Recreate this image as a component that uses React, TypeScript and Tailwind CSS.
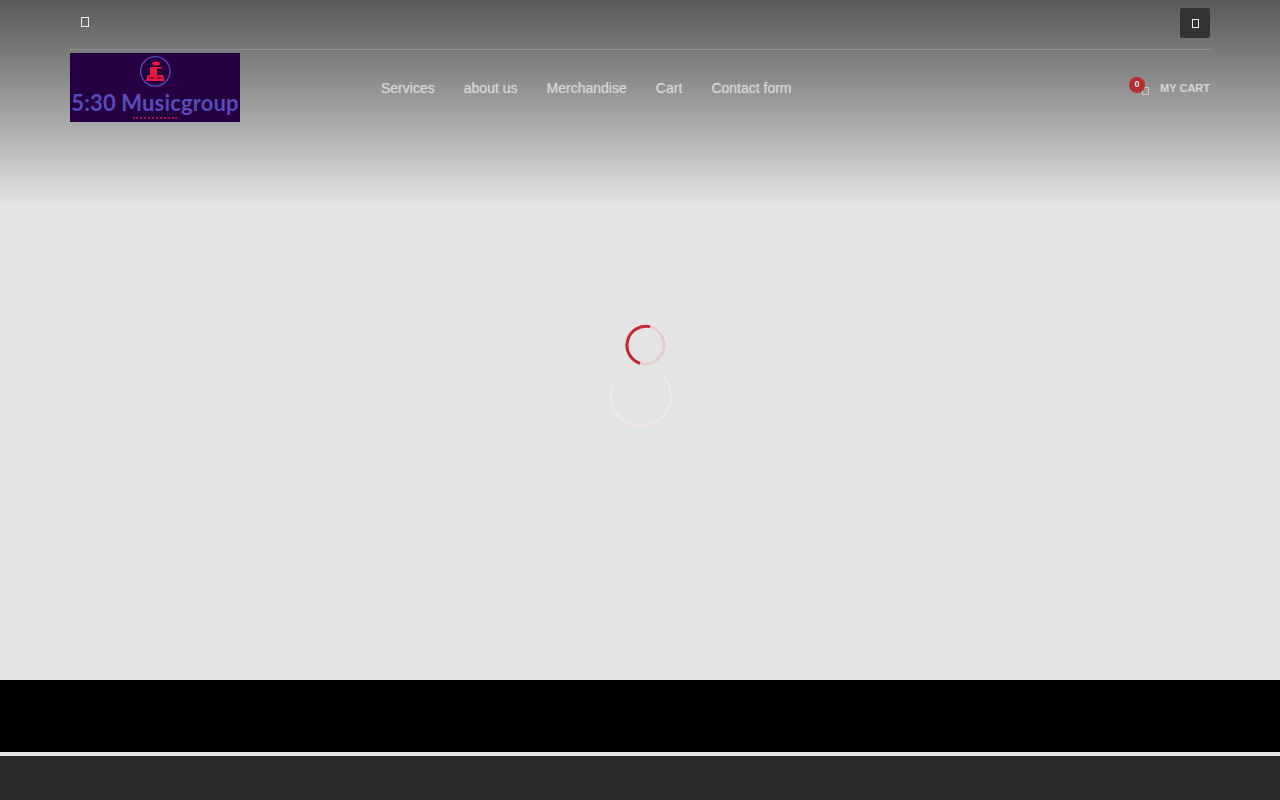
const navLinks = ['Services', 'about us', 'Merchandise', 'Cart', 'Contact form']

function Tofu({ className }: { className: string }) {
  return <span className={`block border ${className}`} />
}

function Logo() {
  return (
    <div className="flex h-[69px] w-[170px] flex-col items-center overflow-hidden bg-[#240040] font-['Lato',sans-serif]">
      <svg width="34" height="34" viewBox="0 0 34 34" className="mt-[1px] shrink-0" fill="none">
        <circle cx="17.3" cy="17.3" r="14.7" stroke="#5a45b4" strokeWidth="1.4" />
        <ellipse cx="18" cy="9.5" rx="4" ry="2" fill="#e8173c" />
        <path d="M12 13h12v1.6h-5V21h-7z" fill="#e8173c" />
        <path d="M9.5 21h15.6l1.6 6H8z" fill="#e8173c" />
        <path d="M11 24h5M19 24h5" stroke="#240040" strokeWidth="1" />
      </svg>
      <span className="mt-[2px] whitespace-nowrap text-[22px] leading-[25px] font-bold tracking-[0.15px] text-[#5a4abb]">5:30 Musicgroup</span>
      <span className="mt-[2px] h-[2px] w-[44px] shrink-0 border-t-2 border-dotted border-[#a01048]" />
    </div>
  )
}

function Spinners() {
  return (
    <div className="flex flex-col items-center pt-[118px]">
      <svg width="44" height="44" viewBox="0 0 44 44" className="ml-[10px]" fill="none">
        <circle cx="22" cy="22" r="19" stroke="#e2cccc" strokeWidth="2.5" />
        <path d="M27 3.7A19 19 0 0 0 17 40.3" stroke="#c5262c" strokeWidth="2.9" />
      </svg>
      <svg width="66" height="66" viewBox="0 0 66 66" className="-mt-[4px] ml-[2px]" fill="none">
        <path d="M6.2 19A30 30 0 1 0 54 11.6" stroke="#f2e6e6" strokeWidth="2.6" strokeLinecap="round" />
      </svg>
    </div>
  )
}

export default function App() {
  return (
    <div className="flex h-[800px] flex-col overflow-hidden bg-[#e4e4e4] font-['Liberation_Sans',sans-serif]">
      <main className="h-[680px] shrink-0">
        <header className="h-[205px] bg-gradient-to-b from-[#595959] to-[#e4e4e4]">
          <div className="mx-[70px]">
            <div className="flex h-[50px] items-start justify-between border-b border-[#a0a0a0]/60 pt-[8px]">
              <Tofu className="mt-[9px] ml-[11px] h-[10px] w-[8px] border-[#eeeeee]" />
              <button type="button" className="flex h-[30px] w-[30px] items-center justify-center rounded-[2px] bg-[#333333]">
                <Tofu className="h-[9px] w-[7px] border-[#eeeeee]" />
              </button>
            </div>
            <div className="flex items-center pt-[3px]">
              <Logo />
              <nav className="mt-[1px] ml-[141px] flex gap-[29.1px] text-[14px] text-[#d6d6d6] [text-shadow:0_0_1px_rgba(255,255,255,0.45)]">
                {navLinks.map((link) => (
                  <a key={link} href="#" className="whitespace-nowrap">{link}</a>
                ))}
              </nav>
              <div className="mt-[1px] ml-auto flex items-center">
                <div className="relative h-[12px] w-[7px] translate-y-[1px]">
                  <Tofu className="h-[8px] w-[7px] translate-y-[4px] border-[#cccccc]" />
                  <span className="absolute -top-[6px] -left-[13px] flex h-4 w-4 items-center justify-center rounded-full bg-[#b52d2f] text-[9px] font-bold text-[#e6e6e6]">0</span>
                </div>
                <span className="ml-[11px] text-[11px] font-bold text-[#d6d6d6]">MY CART</span>
              </div>
            </div>
          </div>
        </header>
        <Spinners />
      </main>
      <div className="h-[72px] shrink-0 bg-black" />
      <div className="h-[4px] shrink-0 bg-[#e4e4e4]" />
      <div className="grow bg-[#2b2b2b]" />
    </div>
  )
}
